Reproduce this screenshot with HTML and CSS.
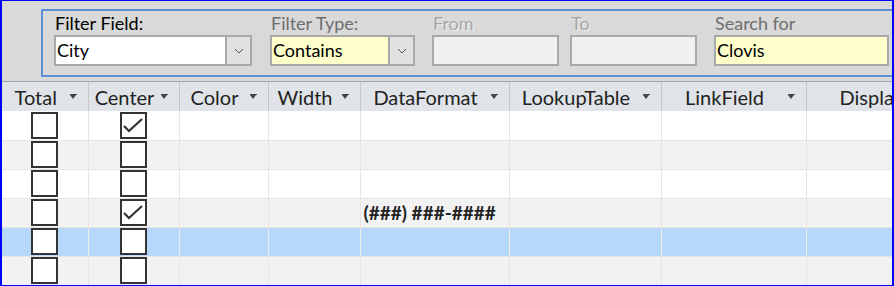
FILE: index.html
```html
<!DOCTYPE html>
<html lang="en">
<head>
    <meta charset="UTF-8">
    <title>Field Properties</title>
    <link rel="stylesheet" href="styles.css">
</head>
<body>
    <div class="window">
        <div class="filter-area">
            <div class="filter-frame">
                <div class="field field-name">
                    <label class="field-label">Filter Field:</label>
                    <div class="combo">
                        <span class="combo-text">City</span>
                        <span class="combo-btn"><svg width="10" height="6" viewBox="0 0 10 6"><path d="M1 1 L5 5 L9 1" fill="none" stroke="#555" stroke-width="1"/></svg></span>
                    </div>
                </div>
                <div class="field field-type">
                    <label class="field-label muted">Filter Type:</label>
                    <div class="combo highlight">
                        <span class="combo-text">Contains</span>
                        <span class="combo-btn"><svg width="10" height="6" viewBox="0 0 10 6"><path d="M1 1 L5 5 L9 1" fill="none" stroke="#555" stroke-width="1"/></svg></span>
                    </div>
                </div>
                <div class="field field-from">
                    <label class="field-label disabled">From</label>
                    <div class="textbox off"></div>
                </div>
                <div class="field field-to">
                    <label class="field-label disabled">To</label>
                    <div class="textbox off"></div>
                </div>
                <div class="field field-search">
                    <label class="field-label muted">Search for</label>
                    <div class="textbox highlight">Clovis</div>
                </div>
            </div>
        </div>

        <table class="grid">
            <colgroup>
                <col style="width:86px">
                <col style="width:91px">
                <col style="width:89px">
                <col style="width:92px">
                <col style="width:149px">
                <col style="width:152px">
                <col style="width:145px">
                <col style="width:100px">
            </colgroup>
            <thead>
                <tr>
                    <th><div class="head"><span class="head-text">Total</span><span class="arrow"></span></div></th>
                    <th><div class="head"><span class="head-text">Center</span><span class="arrow"></span></div></th>
                    <th><div class="head"><span class="head-text">Color</span><span class="arrow"></span></div></th>
                    <th><div class="head"><span class="head-text">Width</span><span class="arrow"></span></div></th>
                    <th><div class="head"><span class="head-text">DataFormat</span><span class="arrow"></span></div></th>
                    <th><div class="head"><span class="head-text">LookupTable</span><span class="arrow"></span></div></th>
                    <th><div class="head"><span class="head-text">LinkField</span><span class="arrow"></span></div></th>
                    <th><div class="head"><span class="head-text last">Displa</span></div></th>
                </tr>
            </thead>
            <tbody id="rows"></tbody>
        </table>
    </div>

    <script>
        const rows = [
            { total: false, center: true, format: '' },
            { total: false, center: false, format: '' },
            { total: false, center: false, format: '' },
            { total: false, center: true, format: '(###) ###-####' },
            { total: false, center: false, format: '', selected: true },
            { total: false, center: false, format: '' }
        ];

        const tick = '<svg width="23" height="23" viewBox="0 0 23 23"><path d="M2 12 L7 17 L20 5" fill="none" stroke="#333" stroke-width="2.2"/></svg>';

        function box(checked) {
            return '<span class="check">' + (checked ? tick : '') + '</span>';
        }

        const body = document.getElementById('rows');
        rows.forEach(function (r) {
            const tr = document.createElement('tr');
            if (r.selected) tr.className = 'selected';
            tr.innerHTML =
                '<td class="box-cell">' + box(r.total) + '</td>' +
                '<td class="box-cell">' + box(r.center) + '</td>' +
                '<td></td><td></td>' +
                '<td class="text-cell">' + r.format + '</td>' +
                '<td></td><td></td><td></td>';
            body.appendChild(tr);
        });
    </script>
</body>
</html>
```

FILE: styles.css
```css
* {
    box-sizing: border-box;
}
body {
    margin: 0;
    font-family: Lato, "Open Sans", sans-serif;
    background-color: #ffffff;
}
.window {
    width: 894px;
    height: 286px;
    border-top: 1px solid #0000ff;
    border-bottom: 1px solid #0000ff;
    border-left: 2px solid #0000ff;
    border-right: 2px solid #0000ff;
    overflow: hidden;
    background-color: #f2f2f2;
}
.filter-area {
    height: 81px;
    background-color: #d9d9d9;
    padding: 8px 0 0 39px;
    border-bottom: 1px solid #a5a5a5;
}
.filter-frame {
    width: 880px;
    height: 68px;
    border: 2px solid #5b8fd6;
    display: flex;
    padding: 1px 0 0 11px;
}
.field {
    display: flex;
    flex-direction: column;
}
.field-name { width: 198px; }
.field-type { width: 145px; margin-left: 18px; }
.field-from { width: 127px; margin-left: 17px; }
.field-to { width: 127px; margin-left: 11px; }
.field-search { width: 175px; margin-left: 17px; }
.field-label {
    font-size: 18px;
    line-height: 22px;
    height: 23px;
    padding-left: 1px;
    color: #000000;
}
.field-label.muted {
    color: #6e6e6e;
}
.field-label.disabled {
    color: #a6a6a6;
    text-shadow: 1px 1px 0 #f4f4f4;
}
.combo, .textbox {
    height: 31px;
    border: 2px solid #a9a9a9;
    background-color: #ffffff;
    font-size: 18px;
    color: #000000;
}
.combo {
    display: flex;
}
.combo-text {
    flex: 1;
    line-height: 27px;
    padding-left: 1px;
}
.combo-btn {
    width: 25px;
    background-color: #e1e1e1;
    border-left: 2px solid #a9a9a9;
    display: flex;
    align-items: center;
    justify-content: center;
}
.textbox {
    line-height: 27px;
    padding-left: 1px;
}
.highlight {
    background-color: #ffffcc;
}
.textbox.off {
    background-color: #f0f0f0;
}
.grid {
    border-collapse: collapse;
    table-layout: fixed;
    width: 904px;
}
.grid th {
    height: 29px;
    padding: 0;
    background-color: #e0e4e9;
    border-right: 1px solid #c3c7cc;
    font-weight: normal;
    font-size: 20px;
    color: #222222;
}
.head {
    display: flex;
    align-items: center;
    padding-right: 11px;
}
.head-text {
    flex: 1;
    text-align: center;
    white-space: nowrap;
}
.head-text.last {
    text-align: left;
    padding-left: 33px;
}
.arrow {
    width: 7px;
    height: 5px;
    border-top: 1px solid #444;
    position: relative;
}
.arrow::after {
    content: "";
    position: absolute;
    left: 0;
    top: 0;
    border-left: 3.5px solid transparent;
    border-right: 3.5px solid transparent;
    border-top: 4px solid #444;
}
.grid td {
    height: 29px;
    padding: 0;
    border-right: 1px solid #e8e6dc;
    border-bottom: 1px solid #e8e6dc;
    background-color: #f2f2f2;
}
.grid tbody tr:nth-child(odd) td {
    background-color: #ffffff;
}
.grid tbody tr.selected td {
    background-color: #b6d9fb;
    border-right-color: #ecebe4;
}
.box-cell {
    text-align: center;
    line-height: 0;
}
.check {
    display: inline-block;
    width: 27px;
    height: 27px;
    border: 2px solid #333333;
    background-color: #ffffff;
    vertical-align: middle;
}
.text-cell {
    font-size: 19px;
    font-weight: bold;
    color: #222222;
    padding-left: 3px !important;
    white-space: nowrap;
}
```
